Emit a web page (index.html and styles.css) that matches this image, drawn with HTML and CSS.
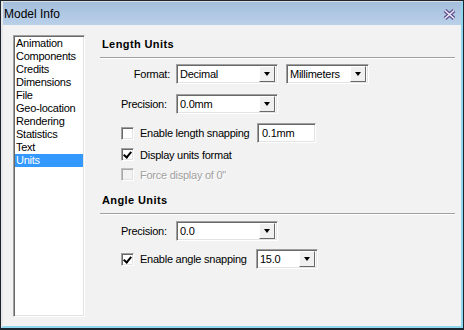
FILE: index.html
```html
<!DOCTYPE html>
<html lang="en">
  <head>
    <meta charset="UTF-8" />
    <title>Model Info</title>
    <link rel="stylesheet" href="styles.css">
  </head>
  <body>
    <div class="window">
      <div class="frame">
        <header class="titlebar">
          <span class="title">Model Info</span>
          <svg class="close" width="13" height="11" viewBox="0 0 13 11">
            <path d="M2 1.5 L11 9.5 M11 1.5 L2 9.5" stroke="#5e4f8c" stroke-width="4" />
            <path d="M2 1.5 L11 9.5 M11 1.5 L2 9.5" stroke="#ece8f7" stroke-width="1.6" />
          </svg>
        </header>

        <div class="client">
          <ul class="list">
            <li>Animation</li>
            <li>Components</li>
            <li>Credits</li>
            <li>Dimensions</li>
            <li>File</li>
            <li>Geo-location</li>
            <li>Rendering</li>
            <li>Statistics</li>
            <li>Text</li>
            <li class="selected">Units</li>
          </ul>

          <main class="panel">
            <div class="section-title">Length Units</div>

            <div class="row row-format">
              <span class="label label-right">Format:</span>
              <div class="combo combo-wide"><span class="value">Decimal</span><span class="drop"></span></div>
              <div class="combo combo-unit"><span class="value">Millimeters</span><span class="drop"></span></div>
            </div>

            <div class="row row-precision">
              <span class="label">Precision:</span>
              <div class="combo combo-wide"><span class="value">0.0mm</span><span class="drop"></span></div>
            </div>

            <div class="row row-snap">
              <label class="check snap-length"><span class="box"></span>Enable length snapping</label>
              <div class="field">0.1mm</div>
            </div>

            <div class="row row-check">
              <label class="check"><span class="box checked"></span>Display units format</label>
            </div>

            <div class="row row-check row-disabled">
              <label class="check disabled"><span class="box"></span>Force display of 0"</label>
            </div>

            <div class="section-title section-angle">Angle Units</div>

            <div class="row row-angle-precision">
              <span class="label">Precision:</span>
              <div class="combo combo-wide"><span class="value">0.0</span><span class="drop"></span></div>
            </div>

            <div class="row row-angle-snap">
              <label class="check snap-angle"><span class="box checked"></span>Enable angle snapping</label>
              <div class="combo combo-step"><span class="value">15.0</span><span class="drop"></span></div>
            </div>
          </main>
        </div>
      </div>
    </div>
  </body>
</html>
```

FILE: styles.css
```css
:root {
  --face: #f2f2f2;
  --dark: #1c2430;
  --shadow: #a0a0a0;
  --shadow-dark: #696969;
  --light: #e3e3e3;
  --select: #3399ff;
  --rim: #8fd6ee;
}
* {
  margin: 0;
  padding: 0;
  box-sizing: border-box;
}
body {
  font-family: "Liberation Sans", Arial, sans-serif;
  font-size: 11px;
  letter-spacing: -0.25px;
  color: #000;
  background: var(--face);
}
.window {
  width: 464px;
  height: 330px;
  border: 1px solid var(--dark);
  border-bottom-width: 2px;
  background: var(--face);
  display: flex;
}
.frame {
  flex: 1;
  display: flex;
  flex-direction: column;
  border-top: 1px solid #dcdcdc;
  border-left: 2px solid #e8e8e8;
  border-right: 2px solid var(--rim);
  border-bottom: 2px solid var(--rim);
}
.titlebar {
  height: 23px;
  display: flex;
  align-items: center;
  justify-content: space-between;
  padding: 0 5px 0 1px;
  background: linear-gradient(#a3bedc, #bad0e9);
}
.title {
  font-size: 12px;
  line-height: 14px;
  letter-spacing: 0;
  margin-top: 1px;
}
.close {
  display: block;
  margin-top: 1px;
}
.client {
  flex: 1;
  display: flex;
  padding: 10px 0 9px 10px;
}
.list {
  list-style: none;
  width: 72px;
  background: #fff;
  border: 1px solid;
  border-color: var(--shadow) #fff #fff var(--shadow);
  box-shadow: inset 1px 1px var(--shadow-dark), inset -1px -1px var(--light);
  padding: 1px;
}
.list li {
  height: 13px;
  line-height: 13px;
  padding-left: 1px;
  white-space: nowrap;
}
.list li.selected {
  background: var(--select);
  color: #fff;
}
.panel {
  flex: 1;
  margin-left: 15px;
  margin-right: 6px;
}
.section-title {
  font-weight: bold;
  letter-spacing: 0.4px;
  line-height: 13px;
  padding: 3px 0 6px 2px;
  border-bottom: 1px solid var(--shadow);
  box-shadow: 0 1px #fff;
}
.section-angle {
  margin-top: 10px;
}
.row {
  display: flex;
  align-items: center;
  padding-left: 21px;
  height: 20px;
}
.row-format {
  margin-top: 6px;
}
.row-precision {
  margin-top: 10px;
}
.row-snap {
  margin-top: 9px;
}
.row-check {
  height: 13px;
  margin-top: 5px;
}
.row-disabled {
  margin-top: 7px;
}
.row-angle-precision {
  margin-top: 7px;
}
.row-angle-snap {
  margin-top: 8px;
}
.label {
  width: 49px;
  margin-right: 6px;
  white-space: nowrap;
}
.label-right {
  text-align: right;
}
.combo,
.field {
  height: 20px;
  background: #fff;
  border: 1px solid;
  border-color: var(--shadow) #fff #fff var(--shadow);
  box-shadow: inset 1px 1px var(--shadow-dark), inset -1px -1px var(--light);
  display: flex;
  align-items: center;
  padding: 2px;
}
.combo .value {
  flex: 1;
  padding-left: 1px;
  white-space: nowrap;
}
.drop {
  width: 16px;
  height: 16px;
  background: #f0f0f0;
  border: 1px solid;
  border-color: #fff #696969 #696969 #fff;
  display: flex;
  align-items: center;
  justify-content: center;
}
.drop::after {
  content: "";
  width: 0;
  height: 0;
  border-top: 4px solid #000;
  border-left: 3.5px solid transparent;
  border-right: 3.5px solid transparent;
}
.combo-wide {
  width: 102px;
}
.combo-unit {
  width: 83px;
  margin-left: 8px;
}
.combo-step {
  width: 62px;
}
.field {
  width: 59px;
  padding-left: 4px;
}
.check {
  display: flex;
  align-items: center;
  white-space: nowrap;
}
.snap-length {
  width: 136px;
}
.snap-angle {
  width: 135px;
}
.box {
  width: 13px;
  height: 13px;
  margin-right: 6px;
  background: #fff;
  border: 1px solid;
  border-color: var(--shadow) #fff #fff var(--shadow);
  box-shadow: inset 1px 1px var(--shadow-dark), inset -1px -1px var(--light);
  position: relative;
}
.box.checked::after {
  content: "";
  position: absolute;
  left: 3px;
  top: 1px;
  width: 3px;
  height: 6px;
  border-right: 2px solid #000;
  border-bottom: 2px solid #000;
  transform: rotate(40deg);
}
.check.disabled {
  color: #a0a0a0;
  text-shadow: 1px 1px #fff;
}
.check.disabled .box {
  background: var(--face);
  border-color: #c0c0c0 #fff #fff #c0c0c0;
  box-shadow: inset 1px 1px #a8a8a8, inset -1px -1px var(--light);
}
```
